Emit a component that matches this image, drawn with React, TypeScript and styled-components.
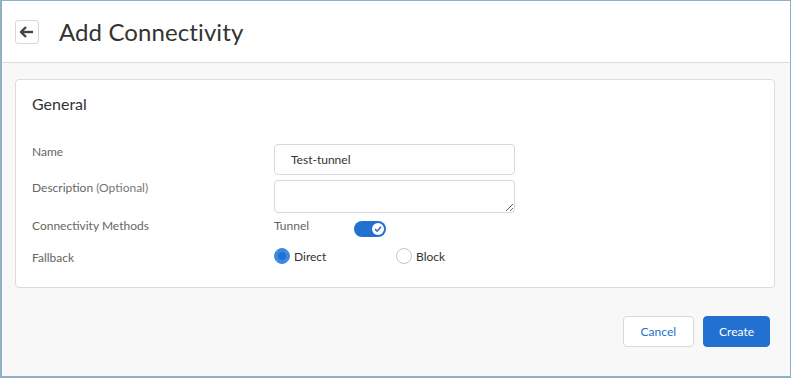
import { createGlobalStyle, styled } from 'styled-components';

const GlobalStyle = createGlobalStyle`
  html, body {
    margin: 0;
    padding: 0;
    height: 100%;
  }
  body {
    font-family: Lato, "Open Sans", sans-serif;
    color: #333;
  }
  #root {
    height: 100%;
  }
`;

const App = () => {
  return (
    <Frame>
      <GlobalStyle />
      <Header>
        <BackButton aria-label="Back">
          <svg width="14" height="12" viewBox="0 0 14 12">
            <path d="M6 1 L1 6 L6 11" fill="none" stroke="#444" strokeWidth="2.4" />
            <path d="M2 6 H13" stroke="#444" strokeWidth="2.4" />
          </svg>
        </BackButton>
        <Title>Add Connectivity</Title>
      </Header>
      <Body>
        <Card>
          <CardTitle>General</CardTitle>
          <Form>
            <Label $top={0}>Name</Label>
            <TextInput value="Test-tunnel" readOnly />
            <Label $top={0}>
              Description <Muted>(Optional)</Muted>
            </Label>
            <TextArea />
            <Label $top={0}>Connectivity Methods</Label>
            <MethodRow>
              <OptionText>Tunnel</OptionText>
              <Toggle>
                <Knob>
                  <svg width="10" height="10" viewBox="0 0 10 10">
                    <path d="M2 5.2 L4.2 7.2 L8 2.8" fill="none" stroke="#2270cf" strokeWidth="1.6" />
                  </svg>
                </Knob>
              </Toggle>
            </MethodRow>
            <Label $top={2}>Fallback</Label>
            <RadioRow>
              <RadioOption $width={122}>
                <Radio $checked />
                <RadioText>Direct</RadioText>
              </RadioOption>
              <RadioOption>
                <Radio />
                <RadioText>Block</RadioText>
              </RadioOption>
            </RadioRow>
          </Form>
        </Card>
        <Actions>
          <Button>Cancel</Button>
          <Button $primary>Create</Button>
        </Actions>
      </Body>
    </Frame>
  );
};

export default App;

const Frame = styled.div`
  box-sizing: border-box;
  height: 378px;
  border: 1px solid #8fb1c2;
  border-left-width: 2px;
  border-bottom-width: 2px;
  background: #f8f8f8;
  display: flex;
  flex-direction: column;
`;

const Header = styled.div`
  height: 61px;
  background: #fff;
  border-bottom: 1px solid #dcdcdc;
  display: flex;
  align-items: center;
  padding-left: 13px;
  gap: 20px;
`;

const BackButton = styled.button`
  box-sizing: border-box;
  width: 24px;
  height: 24px;
  border: 1px solid #d9d9d9;
  border-radius: 3px;
  background: #fff;
  display: flex;
  align-items: center;
  justify-content: center;
  padding: 0;
`;

const Title = styled.h1`
  margin: 0;
  font-size: 24px;
  font-weight: 400;
  color: #333;
  letter-spacing: 0.1px;
`;

const Body = styled.div`
  flex: 1;
  padding: 16px 15px 0 13px;
  display: flex;
  flex-direction: column;
`;

const Card = styled.div`
  height: 209px;
  box-sizing: border-box;
  background: #fff;
  border: 1px solid #dcdcdc;
  border-radius: 4px;
  padding: 14px 16px 0;
`;

const CardTitle = styled.h2`
  margin: 0;
  font-size: 16px;
  font-weight: 400;
  color: #333;
  line-height: 20px;
`;

const Form = styled.div`
  display: grid;
  grid-template-columns: 242px 241px;
  grid-auto-rows: auto;
  row-gap: 5px;
  margin-top: 30px;
`;

const Label = styled.div<{ $top: number }>`
  font-size: 12px;
  color: #666;
  line-height: 15px;
  padding-top: ${(p) => p.$top}px;
`;

const Muted = styled.span`
  color: #777;
`;

const TextInput = styled.input`
  box-sizing: border-box;
  height: 31px;
  width: 100%;
  border: 1px solid #d9d9d9;
  border-radius: 4px;
  padding: 0 16px;
  font-family: Lato, sans-serif;
  font-size: 12px;
  color: #333;
  outline: none;
`;

const TextArea = styled.textarea`
  box-sizing: border-box;
  height: 33px;
  width: 100%;
  border: 1px solid #d9d9d9;
  border-radius: 4px;
  font-family: Lato, sans-serif;
  font-size: 12px;
  display: block;
  margin: 0;
  outline: none;
`;

const MethodRow = styled.div`
  display: flex;
  align-items: flex-start;
  height: 25px;
`;

const OptionText = styled.span`
  font-size: 12px;
  color: #666;
  line-height: 15px;
  width: 80px;
`;

const Toggle = styled.div`
  box-sizing: border-box;
  width: 32px;
  height: 16px;
  margin-top: 3px;
  border-radius: 8px;
  background: #2270cf;
  display: flex;
  align-items: center;
  justify-content: flex-end;
  padding-right: 2px;
`;

const Knob = styled.div`
  width: 12px;
  height: 12px;
  border-radius: 50%;
  background: #fff;
  display: flex;
  align-items: center;
  justify-content: center;
`;

const RadioRow = styled.div`
  display: flex;
  align-items: center;
  margin-top: -1px;
`;

const RadioOption = styled.div<{ $width?: number }>`
  display: flex;
  align-items: center;
  gap: 4px;
  width: ${(p) => (p.$width ? `${p.$width}px` : 'auto')};
`;

const Radio = styled.span<{ $checked?: boolean }>`
  box-sizing: border-box;
  width: 16px;
  height: 16px;
  border-radius: 50%;
  border: 1px solid ${(p) => (p.$checked ? '#3f8ae0' : '#c4c4c4')};
  background: ${(p) => (p.$checked ? '#3f8ae0' : '#fff')};
  display: flex;
  align-items: center;
  justify-content: center;
  ${(p) =>
    p.$checked
      ? `&::after { content: ''; width: 8px; height: 8px; border-radius: 50%; background: #2270cf; }`
      : ''}
`;

const RadioText = styled.span`
  font-size: 12px;
  color: #333;
`;

const Actions = styled.div`
  display: flex;
  justify-content: flex-end;
  gap: 9px;
  margin-top: 28px;
  padding-right: 5px;
`;

const Button = styled.button<{ $primary?: boolean }>`
  box-sizing: border-box;
  height: 31px;
  padding: 0 ${(p) => (p.$primary ? 15 : 17)}px;
  border-radius: 4px;
  font-family: Lato, sans-serif;
  font-size: 12px;
  border: 1px solid ${(p) => (p.$primary ? '#2270cf' : '#d9d9d9')};
  background: ${(p) => (p.$primary ? '#2270cf' : '#fff')};
  color: ${(p) => (p.$primary ? '#fff' : '#2270cf')};
`;
